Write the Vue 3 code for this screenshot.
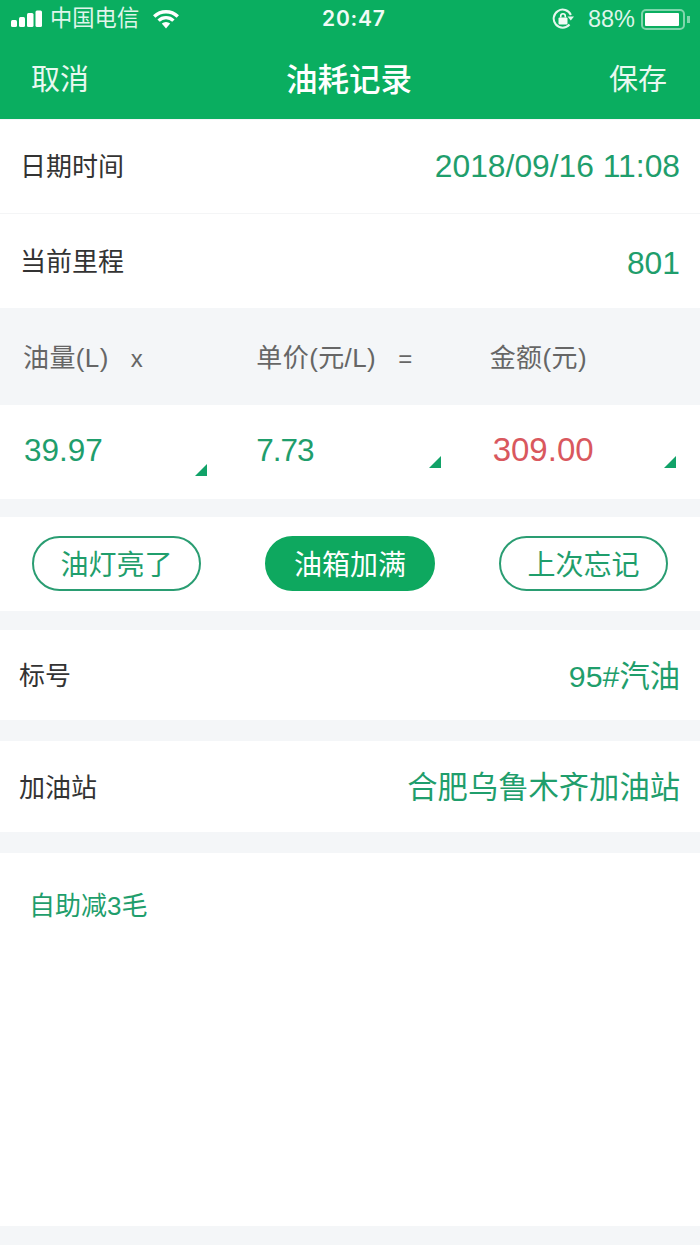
<script setup>
const pills = [
  { label: '油灯亮了', active: false },
  { label: '油箱加满', active: true },
  { label: '上次忘记', active: false },
];

const columns = [
  { label: '油量(L)', op: 'x', value: '39.97', cls: 'calc-value--first' },
  { label: '单价(元/L)', op: '=', value: '7.73', cls: 'calc-value--tight' },
  { label: '金额(元)', op: '', value: '309.00', cls: 'calc-value--red' },
];
</script>

<template>
  <div class="page">
    <header class="top">
      <div class="status">
        <div class="status-left">
          <svg class="signal" width="31" height="18" viewBox="0 0 31 18">
            <rect x="0" y="10" width="6" height="7" rx="1.5" />
            <rect x="8" y="7" width="6" height="10" rx="1.5" />
            <rect x="16" y="3" width="6.5" height="14" rx="1.5" />
            <rect x="24.5" y="0.5" width="6.5" height="16.5" rx="1.5" />
          </svg>
          <span class="carrier">中国电信</span>
          <svg class="wifi" width="26" height="20" viewBox="0 0 26 20">
            <path d="M1.2 7.5a17 17 0 0 1 23.6 0" fill="none" stroke="#fff" stroke-width="3.4" />
            <path d="M5.6 11.6a10.6 10.6 0 0 1 14.8 0" fill="none" stroke="#fff" stroke-width="3.4" />
            <path d="M8.8 14.6a6 6 0 0 1 8.4 0L13 19.5z" fill="#fff" />
          </svg>
        </div>
        <span class="time">20:47</span>
        <div class="status-right">
          <svg class="lock" width="22" height="22" viewBox="0 0 22 22">
            <path d="M17.5 16.5A9 9 0 1 1 18.9 7" fill="none" stroke="#e6f7ee" stroke-width="2" />
            <path d="M15.5 8.5h6.5l-3.2 4z" fill="#e6f7ee" />
            <rect x="6.5" y="9.5" width="9" height="7" rx="1" fill="#f4fbf7" />
            <path d="M8.7 9.5V8a2.3 2.3 0 0 1 4.6 0v1.5" fill="none" stroke="#f4fbf7" stroke-width="1.6" />
          </svg>
          <span class="percent">88%</span>
          <div class="battery"><div class="battery-fill"></div></div>
          <div class="battery-nub"></div>
        </div>
      </div>
      <nav class="nav">
        <span class="nav-btn">取消</span>
        <span class="nav-title">油耗记录</span>
        <span class="nav-btn">保存</span>
      </nav>
    </header>

    <div class="row row-first">
      <span class="row-label">日期时间</span>
      <span class="row-num">2018/09/16 11:08</span>
    </div>
    <div class="row row-second">
      <span class="row-label">当前里程</span>
      <span class="row-num row-num--low">801</span>
    </div>

    <div class="calc-head">
      <div v-for="c in columns" :key="c.label" class="calc-label">
        <span>{{ c.label }}</span>
        <span v-if="c.op" class="calc-op">{{ c.op }}</span>
      </div>
    </div>
    <div class="calc-values">
      <div v-for="c in columns" :key="c.value" class="calc-value" :class="c.cls">
        {{ c.value }}
        <i class="corner"></i>
      </div>
    </div>

    <div class="pills">
      <span
        v-for="p in pills"
        :key="p.label"
        class="pill"
        :class="{ 'pill--active': p.active }"
      >{{ p.label }}</span>
    </div>

    <div class="row row-plain">
      <span class="row-label">标号</span>
      <span class="row-text">95#汽油</span>
    </div>
    <div class="row row-plain">
      <span class="row-label">加油站</span>
      <span class="row-text">合肥乌鲁木齐加油站</span>
    </div>

    <div class="note">自助减3毛</div>
  </div>
</template>

<style scoped>
.page {
  width: 700px;
  height: 1245px;
  display: flex;
  flex-direction: column;
  background: #f4f6f8;
  font-family: "Liberation Sans", "Noto Sans CJK SC", sans-serif;
  overflow: hidden;
}

.top {
  height: 119px;
  background: #0aae60;
  color: #fff;
  margin-bottom: 1px;
}

.status {
  height: 38px;
  position: relative;
  display: flex;
  align-items: center;
  justify-content: space-between;
  padding: 0 10px 0 11px;
}

.status-left,
.status-right {
  display: flex;
  align-items: center;
}

.signal {
  fill: #fff;
}

.carrier {
  margin-left: 8px;
  font-size: 22.3px;
  line-height: 38px;
  color: #dff5ea;
}

.wifi {
  margin-left: 14px;
}

.time {
  position: absolute;
  left: 322px;
  top: 7px;
  font-family: Inter, "Liberation Sans", sans-serif;
  font-size: 21px;
  font-weight: 600;
  letter-spacing: 0.8px;
  line-height: 24px;
  color: #f1fbf6;
}

.percent {
  margin-left: 14px;
  font-size: 23.5px;
  color: #dff5ea;
}

.battery {
  width: 44px;
  height: 21px;
  margin-left: 6px;
  box-sizing: border-box;
  border: 2px solid #7fd6ac;
  border-radius: 5px;
  padding: 2px;
}

.battery-fill {
  width: 34px;
  height: 13px;
  background: #fff;
  border-radius: 1px;
}

.battery-nub {
  width: 3px;
  height: 7px;
  margin-left: 2px;
  background: #7fd6ac;
}

.nav {
  height: 81px;
  display: flex;
  align-items: center;
  justify-content: space-between;
  padding: 0 33px 3px 31px;
  box-sizing: border-box;
}

.nav-btn {
  font-size: 29px;
  color: #e9f8f0;
}

.nav-title {
  font-size: 31.5px;
  font-weight: 500;
}

.row {
  display: flex;
  align-items: center;
  justify-content: space-between;
  background: #fff;
  flex-shrink: 0;
}

.row-first {
  height: 94px;
  padding: 0 20px 4px 20px;
  box-sizing: border-box;
  border-bottom: 1px solid #f4f5f6;
}

.row-second {
  height: 94px;
  padding: 0 20px 4px 20px;
  box-sizing: border-box;
}

.row-label {
  font-size: 26px;
  color: #333;
}

.row-num {
  padding-top: 3px;
  font-size: 31.8px;
  color: #1f9e6c;
}

.row-num--low {
  padding-top: 8px;
}

.row-text {
  font-size: 30.3px;
  color: #1f9e6c;
}

.row-plain {
  height: 90px;
  margin-top: 19px;
  padding: 0 20px 3px 19px;
  box-sizing: border-box;
}

.row-plain + .row-plain {
  height: 91px;
  margin-top: 21px;
}

.calc-head {
  height: 97px;
  display: flex;
  align-items: center;
  flex-shrink: 0;
  padding-bottom: 2px;
  box-sizing: border-box;
}

.calc-label {
  width: 233.33px;
  padding-left: 23px;
  box-sizing: border-box;
  font-size: 26px;
  letter-spacing: 0.4px;
  color: #666;
}

.calc-op {
  margin-left: 22px;
  font-size: 24px;
}

.calc-values {
  height: 94px;
  display: flex;
  background: #fff;
  flex-shrink: 0;
}

.calc-value {
  position: relative;
  width: 233.33px;
  padding-left: 24px;
  box-sizing: border-box;
  font-size: 31.5px;
  line-height: 90px;
  color: #1f9e6c;
}

.calc-value--tight {
  padding-left: 23px;
  letter-spacing: -1px;
}

.calc-value--red {
  padding-left: 26px;
  font-size: 33px;
  color: #d9585e;
}

.corner {
  position: absolute;
  right: 26px;
  bottom: 31px;
  width: 0;
  height: 0;
  border-style: solid;
  border-width: 0 0 12px 12px;
  border-color: transparent transparent #11a268 transparent;
}

.calc-value--first .corner {
  bottom: 23px;
}

.calc-value--red .corner {
  right: 24px;
}

.pills {
  height: 94px;
  margin-top: 18px;
  display: flex;
  align-items: center;
  justify-content: space-between;
  padding: 0 32px 2px;
  box-sizing: border-box;
  background: #fff;
  flex-shrink: 0;
}

.pill {
  width: 169px;
  height: 55px;
  box-sizing: border-box;
  border: 2px solid #2a9d72;
  border-radius: 28px;
  display: flex;
  align-items: center;
  justify-content: center;
  font-size: 28px;
  color: #1f9e6c;
}

.pill--active {
  width: 170px;
  background: #0ea85f;
  border-color: #0ea85f;
  color: #fff;
}

.note {
  flex: 1;
  margin: 21px 0 19px;
  padding: 35px 29px 0;
  background: #fff;
  font-size: 26px;
  line-height: 36px;
  color: #1f9e6c;
}
</style>
